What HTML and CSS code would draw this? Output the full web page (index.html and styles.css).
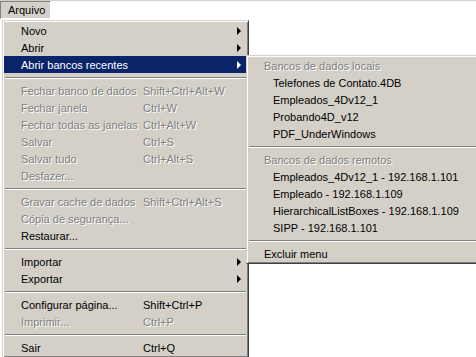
FILE: index.html
```html
<!DOCTYPE html>
<html lang="pt">
<head>
    <meta charset="UTF-8">
    <title>Arquivo</title>
    <link rel="stylesheet" href="styles.css">
</head>
<body>
    <div class="menubar">
        <span class="bar-item open">Arquivo</span>
    </div>

    <div class="menu main-menu">
        <div class="item"><span class="label">Novo</span><span class="arrow"></span></div>
        <div class="item"><span class="label">Abrir</span><span class="arrow"></span></div>
        <div class="item active"><span class="label">Abrir bancos recentes</span><span class="arrow"></span></div>
        <div class="sep"></div>
        <div class="item off"><span class="label">Fechar banco de dados</span><span class="key">Shift+Ctrl+Alt+W</span></div>
        <div class="item off"><span class="label">Fechar janela</span><span class="key">Ctrl+W</span></div>
        <div class="item off"><span class="label">Fechar todas as janelas</span><span class="key">Ctrl+Alt+W</span></div>
        <div class="item off"><span class="label">Salvar</span><span class="key">Ctrl+S</span></div>
        <div class="item off"><span class="label">Salvar tudo</span><span class="key">Ctrl+Alt+S</span></div>
        <div class="item off"><span class="label">Desfazer...</span></div>
        <div class="sep"></div>
        <div class="item off"><span class="label">Gravar cache de dados</span><span class="key">Shift+Ctrl+Alt+S</span></div>
        <div class="item off"><span class="label">Cópia de segurança...</span></div>
        <div class="item"><span class="label">Restaurar...</span></div>
        <div class="sep"></div>
        <div class="item"><span class="label">Importar</span><span class="arrow"></span></div>
        <div class="item"><span class="label">Exportar</span><span class="arrow"></span></div>
        <div class="sep"></div>
        <div class="item"><span class="label">Configurar página...</span><span class="key">Shift+Ctrl+P</span></div>
        <div class="item off"><span class="label">Imprimir...</span><span class="key">Ctrl+P</span></div>
        <div class="sep"></div>
        <div class="item"><span class="label">Sair</span><span class="key">Ctrl+Q</span></div>
    </div>

    <div class="menu sub-menu">
        <div class="item head off">Bancos de dados locais</div>
        <div class="item">Telefones de Contato.4DB</div>
        <div class="item">Empleados_4Dv12_1</div>
        <div class="item">Probando4D_v12</div>
        <div class="item">PDF_UnderWindows</div>
        <div class="sep"></div>
        <div class="item head off">Bancos de dados remotos</div>
        <div class="item">Empleados_4Dv12_1 - 192.168.1.101</div>
        <div class="item">Empleado - 192.168.1.109</div>
        <div class="item">HierarchicalListBoxes - 192.168.1.109</div>
        <div class="item">SIPP - 192.168.1.101</div>
        <div class="sep"></div>
        <div class="item head">Excluir menu</div>
    </div>
</body>
</html>
```

FILE: styles.css
```css
body {
    margin: 0;
    background-color: #ffffff;
    font-family: Tahoma, 'Liberation Sans', sans-serif;
    font-size: 11px;
    color: #000000;
    width: 476px;
    height: 357px;
    overflow: hidden;
    position: relative;
}
.menubar {
    border-top: 1px solid #d4d0c8;
    height: 18px;
    display: flex;
}
.bar-item {
    display: flex;
    align-items: center;
    padding: 0 7px;
    height: 17px;
    width: 35px;
}
.bar-item.open {
    background-color: #d4d0c8;
    border-top: 1px solid #808080;
    border-left: 1px solid #808080;
    border-right: 1px solid #ffffff;
    border-bottom: 1px solid #ffffff;
    height: 16px;
}
.menu {
    position: absolute;
    background-color: #d4d0c8;
    border-top: 1px solid #d4d0c8;
    border-left: 1px solid #d4d0c8;
    border-right: 1px solid #404040;
    border-bottom: 1px solid #404040;
    box-shadow: inset 1px 1px 0 #ffffff, inset -1px -1px 0 #808080;
    padding: 1px;
}
.main-menu {
    left: 2px;
    top: 20px;
    width: 243px;
}
/* cortado pela borda direita da janela */
.sub-menu {
    left: 246px;
    top: 55px;
    right: 0;
    border-right: none;
    padding-right: 0;
    box-shadow: inset 1px 1px 0 #ffffff, inset 0 -1px 0 #808080;
}
.item {
    height: 17px;
    display: flex;
    align-items: center;
    position: relative;
    white-space: nowrap;
}
.main-menu .item {
    padding-left: 17px;
}
.label {
    width: 122px;
}
.item.active {
    background-color: #0a246a;
    color: #ffffff;
}
.item.off {
    color: #808080;
    text-shadow: 1px 1px 0 #ffffff;
}
.arrow {
    position: absolute;
    right: 6px;
    top: 5px;
    width: 0;
    height: 0;
    border-top: 4px solid transparent;
    border-bottom: 4px solid transparent;
    border-left: 4px solid #000000;
}
.item.active .arrow {
    border-left-color: #ffffff;
}
.sub-menu .item {
    padding-left: 25px;
}
.sub-menu .item.head {
    padding-left: 16px;
}
.sep {
    height: 9px;
    display: flex;
    align-items: center;
    padding: 0 1px;
}
.sub-menu .sep {
    padding-right: 0;
}
.sep::before {
    content: '';
    flex: 1;
    border-top: 1px solid #808080;
    border-bottom: 1px solid #ffffff;
}
```
